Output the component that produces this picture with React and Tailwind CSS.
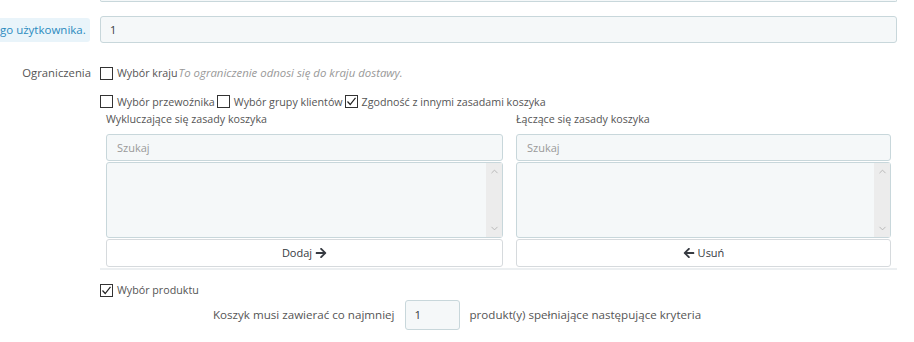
import { FaArrowRight, FaArrowLeft } from 'react-icons/fa'
import { ChevronUp, ChevronDown } from 'lucide-react'

function Box({ checked }) {
  return (
    <span className="inline-flex h-[13px] w-[13px] shrink-0 items-center justify-center border border-[#333] bg-white">
      {checked && (
        <svg width="11" height="11" viewBox="0 0 11 11">
          <path d="M1.5 5.5 L4.2 8.5 L9.5 1.8" fill="none" stroke="#222" strokeWidth="1.2" />
        </svg>
      )}
    </span>
  )
}

function Check({ label, checked }) {
  return (
    <label className="flex h-[18px] items-center gap-[4px] text-[10.7px] text-[#555]">
      <Box checked={checked} />
      <span>{label}</span>
    </label>
  )
}

function RuleList({ title, button, width }) {
  return (
    <div className={width}>
      <div className="h-[18px] text-[10.7px] leading-[18px] text-[#555]">{title}</div>
      <div className="mt-[6px] flex h-[27px] items-center rounded-[3px] border border-[#c8d7db] bg-[#f5f8f9] px-[10px] text-[#9a9a9a]">
        Szukaj
      </div>
      <div className="mt-[1px] flex h-[76px] justify-end rounded-[3px] border border-[#c8d7db] bg-[#f5f8f9]">
        <div className="flex w-[16px] flex-col items-center justify-between bg-[#ececec] py-[3px] text-[#b5b5b5]">
          <ChevronUp size={11} strokeWidth={2} />
          <ChevronDown size={11} strokeWidth={2} />
        </div>
      </div>
      <div className="mt-[1px] flex h-[28px] items-center justify-center gap-[3px] rounded-[3px] border border-[#d6dadd] bg-white text-[#363a41]">
        {button}
      </div>
    </div>
  )
}

export default function App() {
  return (
    <div className="h-[342px] w-[914px] overflow-hidden bg-white font-['Open_Sans',sans-serif] text-[11px] leading-[18px]">
      <div className="ml-[100px] h-[2px] w-[797px] rounded-b-[3px] border border-t-0 border-[#c8d7db] bg-[#f5f8f9]" />

      <div className="mt-[14px] flex items-center">
        <div className="flex w-[100px] pr-[9px]">
          <span className="whitespace-nowrap rounded-r-[3px] bg-[#e9f4fa] pr-[4px] text-[11.5px] leading-[24px] text-[#2b8bbf]">
            go użytkownika.
          </span>
        </div>
        <div className="flex h-[27px] w-[797px] items-center rounded-[3px] border border-[#c8d7db] bg-[#f5f8f9] px-[9px] text-[#363a41]">
          1
        </div>
      </div>

      <div className="mt-[21px] flex h-[18px] items-center">
        <div className="w-[100px] pr-[9px] text-right text-[11.3px] text-[#555]">Ograniczenia</div>
        <Check label="Wybór kraju" />
        <span className="pl-[1px] text-[11.4px] italic text-[#999]">To ograniczenie odnosi się do kraju dostawy.</span>
      </div>

      <div className="ml-[100px] mt-[11px] flex h-[17px] items-center gap-[2px]">
        <Check label="Wybór przewoźnika" />
        <Check label="Wybór grupy klientów" />
        <Check label="Zgodność z innymi zasadami koszyka" checked />
      </div>

      <div className="ml-[106px] flex gap-[13px]">
        <RuleList
          title="Wykluczające się zasady koszyka"
          width="w-[397px]"
          button={<><span>Dodaj</span><FaArrowRight size={12} className="text-[#363a41]" /></>}
        />
        <RuleList
          title="Łączące się zasady koszyka"
          width="w-[375px]"
          button={<><FaArrowLeft size={12} className="text-[#363a41]" /><span>Usuń</span></>}
        />
      </div>

      <div className="ml-[100px] mt-[1px] w-[797px] border-t-2 border-[#eceff1]" />

      <div className="ml-[100px] mt-[11px]">
        <Check label="Wybór produktu" checked />
      </div>

      <div className="ml-[213px] mt-[1px] flex items-center gap-[10px] text-[11.6px] text-[#555]">
        <span>Koszyk musi zawierać co najmniej</span>
        <div className="flex h-[30px] w-[55px] items-center rounded-[3px] border border-[#c8d7db] bg-[#f5f8f9] px-[9px] text-[#363a41]">
          1
        </div>
        <span>produkt(y) spełniające następujące kryteria</span>
      </div>
    </div>
  )
}
